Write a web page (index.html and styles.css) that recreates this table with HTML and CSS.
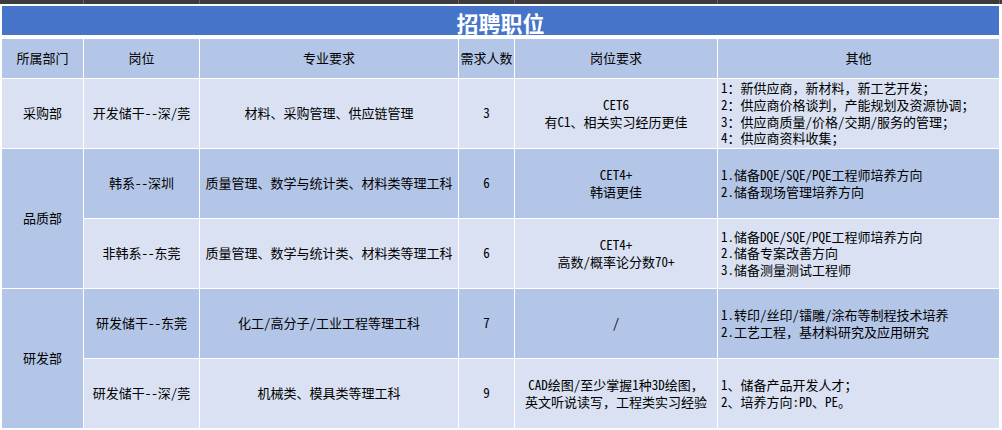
FILE: index.html
```html
<!DOCTYPE html>
<html lang="zh-CN">
<head>
<meta charset="utf-8">
<title>招聘职位</title>
<link rel="stylesheet" href="styles.css">
</head>
<body>
<div class="topbar">
  <div></div><div></div><div></div><div></div><div></div><div></div>
</div>
<div class="sheet">
  <div class="title">招聘职位</div>
  <div class="grid">
    <div class="cell hd"><p>所属部门</p></div>
    <div class="cell hd"><p>岗位</p></div>
    <div class="cell hd"><p>专业要求</p></div>
    <div class="cell hd"><p>需求人数</p></div>
    <div class="cell hd"><p>岗位要求</p></div>
    <div class="cell hd"><p>其他</p></div>

    <div class="cell lt"><p>采购部</p></div>
    <div class="cell lt"><p>开发储干--深/莞</p></div>
    <div class="cell lt"><p>材料、采购管理、供应链管理</p></div>
    <div class="cell lt"><p>3</p></div>
    <div class="cell lt"><p>CET6<br>有C1、相关实习经历更佳</p></div>
    <div class="cell lt left"><p>1：新供应商，新材料，新工艺开发；<br>2：供应商价格谈判，产能规划及资源协调；<br>3：供应商质量/价格/交期/服务的管理；<br>4：供应商资料收集；</p></div>

    <div class="cell dk span2"><p>品质部</p></div>
    <div class="cell dk"><p>韩系--深圳</p></div>
    <div class="cell dk"><p>质量管理、数学与统计类、材料类等理工科</p></div>
    <div class="cell dk"><p>6</p></div>
    <div class="cell dk"><p>CET4+<br>韩语更佳</p></div>
    <div class="cell dk left"><p>1.储备DQE/SQE/PQE工程师培养方向<br>2.储备现场管理培养方向</p></div>

    <div class="cell lt"><p>非韩系--东莞</p></div>
    <div class="cell lt"><p>质量管理、数学与统计类、材料类等理工科</p></div>
    <div class="cell lt"><p>6</p></div>
    <div class="cell lt"><p>CET4+<br>高数/概率论分数70+</p></div>
    <div class="cell lt left"><p>1.储备DQE/SQE/PQE工程师培养方向<br>2.储备专案改善方向<br>3.储备测量测试工程师</p></div>

    <div class="cell dk span2"><p>研发部</p></div>
    <div class="cell dk"><p>研发储干--东莞</p></div>
    <div class="cell dk"><p>化工/高分子/工业工程等理工科</p></div>
    <div class="cell dk"><p>7</p></div>
    <div class="cell dk"><p>/</p></div>
    <div class="cell dk left"><p>1.转印/丝印/镭雕/涂布等制程技术培养<br>2.工艺工程，基材料研究及应用研究</p></div>

    <div class="cell lt"><p>研发储干--深/莞</p></div>
    <div class="cell lt"><p>机械类、模具类等理工科</p></div>
    <div class="cell lt"><p>9</p></div>
    <div class="cell lt"><p>CAD绘图/至少掌握1种3D绘图，<br>英文听说读写，工程类实习经验</p></div>
    <div class="cell lt left"><p>1、储备产品开发人才；<br>2、培养方向:PD、PE。</p></div>
  </div>
</div>
</body>
</html>
```

FILE: styles.css
```css
html, body {
  margin: 0;
  padding: 0;
  background: #ffffff;
}

body {
  width: 1002px;
  height: 430px;
  overflow: hidden;
  font-family: "Noto Sans Mono CJK SC", "Noto Sans CJK SC", sans-serif;
  font-size: 13px;
  color: #000000;
}

.topbar {
  height: 4px;
  background: #3b3b3b;
  display: grid;
  grid-template-columns: 83px 115px 258px 55px 202px 281px;
  column-gap: 1px;
}

.topbar div {
  background: #3b3b3b;
  box-shadow: 1px 0 0 #626262;
}

.sheet {
  padding: 2px 3px 0 2px;
}

.title {
  width: 997px;
  height: 29px;
  box-sizing: border-box;
  padding-top: 5px;
  background: #4674c9;
  color: #ffffff;
  font-family: "Noto Sans CJK SC", sans-serif;
  font-weight: 700;
  font-size: 22px;
  line-height: 23px;
  text-align: center;
  margin-bottom: 4px;
}

.grid {
  display: grid;
  grid-template-columns: 81px 115px 258px 55px 202px 281px;
  grid-template-rows: 39px repeat(5, 69px);
  gap: 1px;
  background: #ffffff;
  width: 997px;
}

.cell {
  display: flex;
  align-items: center;
  justify-content: center;
  text-align: center;
  white-space: nowrap;
  overflow: hidden;
}

.cell p {
  margin: 0;
  line-height: 16.6px;
}

.cell.left {
  justify-content: flex-start;
  text-align: left;
  padding-left: 3px;
}

.hd { background: #b4c6e7; }
.lt { background: #d9e1f2; }
.dk { background: #b4c6e7; }

.span2 {
  grid-row: span 2;
}
```
